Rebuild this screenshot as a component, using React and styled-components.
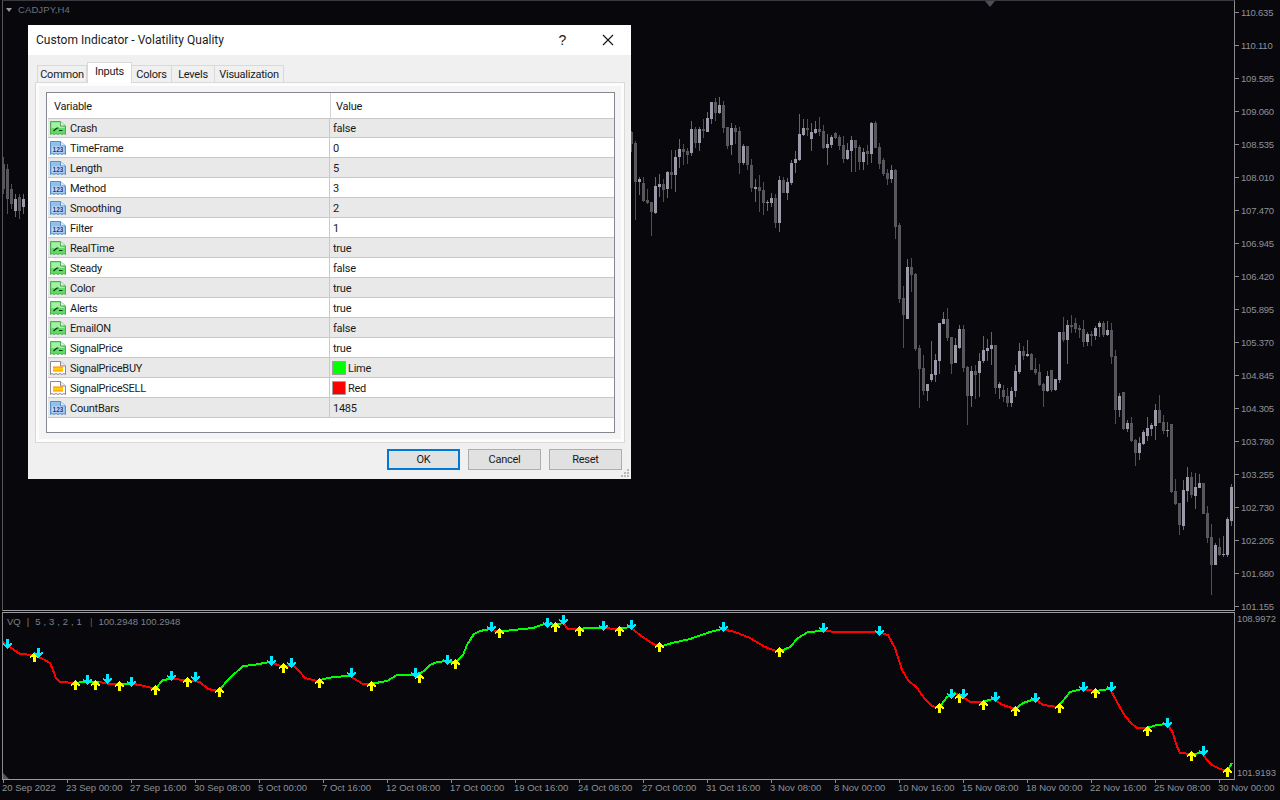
import React from 'react';
import styled, { createGlobalStyle } from 'styled-components';

const GlobalStyle = createGlobalStyle`
  html, body {
    margin: 0;
    padding: 0;
    background: #07070c;
    overflow: hidden;
  }
  #root {
    width: 1280px;
    height: 800px;
  }
`;

const Terminal = styled.div`
  position: relative;
  width: 1280px;
  height: 800px;
  display: flex;
  flex-direction: column;
  background: #07070c;
  font-family: "Liberation Sans", Arial, sans-serif;
  font-size: 9.5px;
  color: #8c929a;
  overflow: hidden;
`;

const Pane = styled.div`
  display: flex;
  height: ${p => p.$height}px;
  margin-bottom: ${p => p.$gap || 0}px;
`;

const Plot = styled.div`
  position: relative;
  width: 1231px;
  margin-left: 2px;
  border-left: 1px solid ${p => p.$edge};
  border-right: 1px solid #8a8a8e;
  border-top: 1px solid ${p => p.$top};
  border-bottom: 1px solid #9a9a9e;
  svg {
    display: block;
  }
`;

const ChartTitle = styled.div`
  position: absolute;
  left: 3px;
  top: 3px;
  display: flex;
  align-items: center;
  gap: 6px;
  line-height: 12px;
  color: #6c727c;
  letter-spacing: 0.1px;
  &::before {
    content: '';
    border-left: 3.5px solid transparent;
    border-right: 3.5px solid transparent;
    border-top: 4px solid #9a9a9e;
  }
`;

const ShiftMark = styled.div`
  position: absolute;
  left: 982px;
  top: 0;
  border-left: 5px solid transparent;
  border-right: 5px solid transparent;
  border-top: 6px solid #4e4e54;
`;

const IndicatorLabel = styled.div`
  position: absolute;
  left: 4px;
  top: 3px;
  display: flex;
  gap: 6px;
  line-height: 12px;
  white-space: pre;
  color: #7a828b;
`;

const IndicatorParams = styled.span`
  word-spacing: 0.3px;
`;

const Divider = styled.span`
  margin-left: 2px;
  color: #8a5a20;
`;

const CornerMark = styled.div`
  position: absolute;
  left: 0;
  bottom: 0;
  border-left: 6px solid #55555c;
  border-top: 6px solid transparent;
`;

const PriceAxis = styled.div`
  display: flex;
  flex-direction: column;
  gap: 24px;
  padding-top: 8px;
`;

const PriceLabel = styled.div`
  display: flex;
  align-items: center;
  height: 9px;
  line-height: 9px;
  letter-spacing: -0.2px;
  &::before {
    content: '';
    width: 4px;
    height: 1px;
    margin-right: 2px;
    background: #8a8a8e;
  }
`;

const IndicatorAxis = styled.div`
  display: flex;
  flex-direction: column;
  justify-content: space-between;
  padding: 1px 0 1px 2px;
`;

const IndicatorPrice = styled.div`
  line-height: 12px;
  letter-spacing: -0.1px;
`;

const TimeAxis = styled.div`
  display: flex;
  padding-left: 2px;
`;

const TimeLabel = styled.div`
  width: 64px;
  flex: none;
  white-space: nowrap;
  line-height: 10px;
  &::before {
    content: '';
    display: block;
    width: 1px;
    height: 3px;
    margin-left: 1px;
    background: #8a8a8e;
  }
`;

/* dialog */
const Dialog = styled.div`
  position: absolute;
  left: 28px;
  top: 25px;
  width: 603px;
  height: 454px;
  display: flex;
  flex-direction: column;
  background: #f0f0f0;
  color: #1a1a1a;
  font-family: Roboto, "Liberation Sans", sans-serif;
  font-size: 11px;
  letter-spacing: -0.25px;
`;

const TitleBar = styled.div`
  height: 30px;
  flex: none;
  display: flex;
  align-items: center;
  padding-left: 8px;
  background: #fff;
  font-size: 12px;
  letter-spacing: 0.03px;
`;

const TitleText = styled.div`
  flex: 1;
`;

const HelpButton = styled.div`
  width: 45px;
  text-align: center;
  font-family: "Liberation Sans", sans-serif;
  font-size: 14px;
`;

const CloseButton = styled.div`
  width: 45px;
  margin-right: 1px;
  display: flex;
  justify-content: center;
`;

const TabStrip = styled.div`
  position: relative;
  z-index: 1;
  display: flex;
  align-items: flex-end;
  height: 21px;
  margin-top: 7px;
  margin-bottom: -1px;
  padding-left: 9px;
`;

const Tab = styled.div`
  width: ${p => p.$width}px;
  height: ${p => (p.$active ? 21 : 18)}px;
  box-sizing: border-box;
  flex: none;
  display: flex;
  align-items: center;
  justify-content: center;
  padding-bottom: ${p => (p.$active ? 3 : 0)}px;
  border: 1px solid #d9d9d9;
  border-left-width: ${p => (p.$active ? 1 : 0)}px;
  border-bottom: ${p => (p.$active ? 'none' : '1px solid #d9d9d9')};
  background: ${p => (p.$active ? '#fff' : '#f0f0f0')};
  &:first-child {
    border-left-width: 1px;
  }
`;

const TabPanel = styled.div`
  box-sizing: border-box;
  height: 361px;
  margin: 0 6px 0 7px;
  padding: 9px 9px 9px 10px;
  border: 1px solid #d9d9d9;
  background: #f4f4f4;
  box-shadow: inset 0 0 0 3px #fcfcfc;
`;

const List = styled.div`
  box-sizing: border-box;
  height: 341px;
  padding-left: 1px;
  border: 1px solid #828790;
  background: #fff;
`;

const Row = styled.div`
  display: grid;
  grid-template-columns: 282px 283px;
  box-sizing: border-box;
  height: 20px;
  border-bottom: 1px solid #c9c9c9;
  background: ${p => (p.$shaded ? '#e9e9e9' : '#fff')};
  &:nth-child(2) {
    height: 19px;
  }
`;

const HeaderRow = styled(Row)`
  height: 26px;
  background: #fff;
`;

const HeaderCell = styled.div`
  display: flex;
  align-items: center;
  padding-top: 2px;
  padding-left: ${p => p.$indent}px;
  border-left: ${p => (p.$divided ? '1px solid #d5d5d5' : 'none')};
`;

const NameCell = styled.div`
  display: flex;
  align-items: center;
  gap: 4px;
  padding-left: 2px;
  border-right: 1px solid #c9c9c9;
  svg {
    flex: none;
  }
`;

const ValueCell = styled.div`
  display: flex;
  align-items: center;
  gap: 2px;
  padding-left: 3px;
`;

const CellText = styled.span`
  padding-top: ${p => (p.$nudged ? 2 : 0)}px;
`;

const Swatch = styled.span`
  box-sizing: border-box;
  width: 14px;
  height: 14px;
  margin-left: -1px;
  border: 1px solid #a0a0a0;
  background: ${p => p.$color};
`;

const ButtonBar = styled.div`
  display: flex;
  justify-content: flex-end;
  gap: 8px;
  margin-top: 6px;
  padding-right: 9px;
`;

const Button = styled.div`
  box-sizing: border-box;
  width: 73px;
  height: 21px;
  display: flex;
  align-items: center;
  justify-content: center;
  border: ${p => (p.$primary ? '2px solid #0078d7' : '1px solid #adadad')};
  background: #e1e1e1;
`;

const Grip = styled.svg`
  position: absolute;
  right: 1px;
  bottom: 1px;
`;

const DocIcon = ({ kind }) => {
  const outline = 'M0.5 1.5H10.5L15.5 6V14.5L14 13.5 12 14.5 10 13.5 8 14.5 6 13.5 4 14.5 2 13.5 0.5 14.5Z';
  if (kind === 'bool') {
    return (
      <svg width="16" height="16" viewBox="0 0 16 16">
        <path d={outline} fill="#5fdc62" stroke="#5aa65c" />
        <path d="M1.5 2.5H10V5.5L14.5 7V8H1.5Z" fill="#a4f0a6" />
        <path d="M10.5 1.5V6H15.5" fill="#e0fae0" stroke="#5aa65c" />
        <path d="M3.5 11L7 8H8.5M9 10.5H12.5" fill="none" stroke="#0c2a16" strokeWidth="1.2" />
      </svg>
    );
  }
  if (kind === 'num') {
    return (
      <svg width="16" height="16" viewBox="0 0 16 16">
        <path d={outline} fill="#8fc0ee" stroke="#5b8fc4" />
        <path d="M10.5 1.5V6H15.5" fill="#dcecfa" stroke="#5b8fc4" />
        <rect x="2" y="6.5" width="12" height="6" fill="#c4ddf6" />
        <text x="8" y="11.8" textAnchor="middle" fontFamily="Liberation Sans, sans-serif" fontSize="6.5" fontWeight="700" letterSpacing="0" fill="#0b3c86">123</text>
      </svg>
    );
  }
  return (
    <svg width="16" height="16" viewBox="0 0 16 16">
      <defs>
        <linearGradient id="fillcolor" x1="0" x2="0" y1="0" y2="1">
          <stop offset="0" stopColor="#ff8a00" />
          <stop offset="0.5" stopColor="#ffe000" />
          <stop offset="1" stopColor="#ff8a00" />
        </linearGradient>
      </defs>
      <path d={outline} fill="#fdfdfd" stroke="#8a8a8a" />
      <path d="M10.5 1.5V6H15.5" fill="#eee" stroke="#8a8a8a" />
      <rect x="3" y="6.5" width="10" height="5" fill="url(#fillcolor)" />
    </svg>
  );
};

const inputs = [
  ['bool', 'Crash', 'false'],
  ['num', 'TimeFrame', '0'],
  ['num', 'Length', '5'],
  ['num', 'Method', '3'],
  ['num', 'Smoothing', '2'],
  ['num', 'Filter', '1'],
  ['bool', 'RealTime', 'true'],
  ['bool', 'Steady', 'false'],
  ['bool', 'Color', 'true'],
  ['bool', 'Alerts', 'true'],
  ['bool', 'EmailON', 'false'],
  ['bool', 'SignalPrice', 'true'],
  ['color', 'SignalPriceBUY', 'Lime', '#00ff00'],
  ['color', 'SignalPriceSELL', 'Red', '#ff0000'],
  ['num', 'CountBars', '1485'],
];

const prices = ['110.635', '110.110', '109.585', '109.060', '108.535', '108.010', '107.470', '106.945', '106.420', '105.895', '105.370', '104.845', '104.305', '103.780', '103.255', '102.730', '102.205', '101.680', '101.155'];

const times = ['20 Sep 2022', '23 Sep 00:00', '27 Sep 16:00', '30 Sep 08:00', '5 Oct 00:00', '7 Oct 16:00', '12 Oct 08:00', '17 Oct 00:00', '19 Oct 16:00', '24 Oct 08:00', '27 Oct 00:00', '31 Oct 16:00', '3 Nov 08:00', '8 Nov 00:00', '10 Nov 16:00', '15 Nov 08:00', '18 Nov 00:00', '22 Nov 16:00', '25 Nov 08:00', '30 Nov 00:00'];

// candles: x, high, body top, body bottom, low, light. Measured in thirds of a pixel from the origin given.
const scale = (ox, oy, rows) => rows.map(([x, hi, top, bot, lo, light]) => ({
  x: Math.floor(ox + x / 3),
  hi: oy + hi / 3,
  top: oy + top / 3,
  bot: oy + bot / 3,
  lo: oy + lo / 3,
  light,
}));

const candles = [
  ...scale(0, 0, [
    [10, 474, 495, 570, 585, 0], [22, 495, 510, 600, 645, 0], [34, 555, 570, 615, 630, 0], [46, 585, 600, 636, 654, 1],
    [58, 585, 594, 636, 660, 0], [70, 585, 600, 624, 645, 1],
  ]),
  ...scale(630, 90, [
    [4, 125, 130, 165, 190, 0], [16, 155, 163, 278, 392, 0], [28, 265, 270, 278, 318, 1], [40, 265, 282, 335, 340, 0],
    [52, 300, 334, 343, 345, 0], [64, 339, 339, 368, 440, 0], [76, 265, 291, 372, 375, 1], [88, 255, 285, 294, 323, 1],
    [100, 270, 285, 303, 340, 0], [112, 245, 249, 300, 326, 1], [124, 183, 249, 258, 300, 0], [136, 183, 204, 258, 308, 1],
    [148, 150, 180, 204, 237, 1], [160, 165, 180, 189, 228, 0], [172, 178, 186, 198, 225, 0], [184, 97, 120, 192, 202, 1],
    [196, 115, 120, 162, 178, 0], [208, 115, 120, 162, 186, 1], [220, 90, 120, 126, 147, 0], [232, 70, 87, 129, 129, 1],
    [244, 39, 39, 90, 105, 1], [256, 27, 39, 72, 96, 0], [268, 24, 48, 72, 75, 1], [280, 36, 48, 117, 132, 0],
    [292, 114, 114, 171, 180, 0], [304, 102, 117, 168, 198, 1], [316, 108, 117, 129, 165, 0], [328, 114, 126, 222, 255, 0],
    [340, 165, 171, 222, 228, 1], [352, 171, 171, 228, 243, 0], [364, 210, 228, 297, 310, 0], [376, 270, 294, 300, 340, 1],
    [388, 258, 294, 306, 370, 0], [400, 279, 303, 342, 378, 0], [412, 333, 339, 342, 366, 1], [424, 312, 327, 342, 354, 1],
    [436, 315, 327, 402, 417, 0], [448, 262, 273, 402, 428, 1], [460, 264, 273, 312, 312, 0], [472, 267, 279, 312, 333, 1],
    [484, 213, 222, 282, 288, 1], [496, 186, 210, 222, 252, 1], [508, 75, 135, 213, 216, 1], [520, 90, 117, 138, 140, 1],
    [532, 90, 117, 123, 140, 0], [544, 102, 129, 150, 186, 1], [556, 96, 120, 132, 135, 1], [568, 84, 120, 129, 140, 0],
    [580, 108, 126, 177, 180, 0], [592, 135, 165, 177, 228, 1], [604, 138, 144, 168, 177, 1], [616, 129, 132, 147, 150, 0],
    [628, 138, 144, 171, 183, 0], [640, 140, 168, 210, 222, 0], [652, 162, 183, 210, 213, 1], [664, 140, 153, 186, 249, 1],
    [676, 153, 153, 177, 249, 0], [688, 168, 174, 219, 243, 0], [700, 178, 189, 219, 243, 1], [712, 168, 186, 195, 228, 0],
    [724, 100, 102, 195, 222, 1], [736, 96, 102, 177, 177, 0], [748, 162, 174, 225, 240, 0], [760, 207, 213, 255, 262, 0],
    [772, 240, 252, 270, 288, 0], [784, 228, 243, 270, 282, 1], [796, 240, 243, 414, 450, 0], [808, 402, 408, 630, 642, 0],
    [820, 591, 627, 678, 777, 0], [832, 510, 534, 690, 690, 1], [844, 507, 534, 558, 609, 0], [856, 552, 555, 780, 786, 0],
  ]),
  ...scale(880, 280, [
    [118, 198, 207, 270, 387, 0], [130, 228, 267, 336, 348, 0], [142, 315, 315, 336, 366, 1], [154, 186, 285, 303, 309, 1],
    [166, 225, 243, 288, 309, 1], [178, 132, 132, 246, 285, 1], [190, 99, 120, 135, 135, 1], [202, 87, 120, 177, 186, 0],
    [214, 174, 174, 255, 285, 0], [226, 177, 198, 252, 252, 1], [238, 138, 150, 207, 210, 1], [250, 138, 150, 267, 279, 0],
    [262, 261, 264, 351, 438, 0], [274, 261, 276, 351, 384, 1], [286, 258, 276, 288, 360, 0], [298, 222, 246, 282, 354, 1],
    [310, 171, 213, 246, 252, 1], [322, 180, 207, 216, 246, 1], [334, 159, 198, 210, 258, 1], [346, 198, 198, 327, 345, 0],
    [358, 309, 315, 327, 360, 1], [370, 318, 333, 354, 369, 0], [382, 327, 351, 372, 384, 0], [394, 324, 336, 372, 384, 1],
    [406, 258, 276, 336, 354, 1], [418, 192, 216, 279, 285, 1], [430, 201, 216, 231, 243, 0], [442, 183, 225, 231, 234, 1],
    [454, 222, 225, 273, 273, 0], [466, 237, 270, 282, 288, 0], [478, 255, 279, 318, 321, 0], [490, 312, 315, 336, 384, 0],
    [502, 276, 291, 336, 339, 1], [514, 273, 273, 333, 339, 0], [526, 300, 300, 333, 336, 1], [538, 159, 159, 303, 312, 1],
    [550, 114, 159, 183, 189, 0], [562, 123, 138, 183, 255, 1], [574, 108, 138, 144, 162, 0], [586, 117, 132, 150, 162, 0],
    [598, 138, 147, 153, 177, 0], [610, 123, 150, 189, 204, 0], [622, 159, 165, 189, 201, 1], [634, 156, 165, 171, 201, 0],
    [646, 141, 147, 171, 183, 1], [658, 126, 132, 144, 174, 1], [670, 126, 132, 168, 174, 0], [682, 126, 153, 168, 171, 1],
    [694, 132, 153, 234, 255, 0], [706, 213, 231, 393, 435, 0], [718, 342, 351, 393, 414, 1], [730, 339, 339, 450, 453, 0],
    [742, 423, 432, 450, 459, 1], [754, 414, 432, 486, 489, 0], [766, 480, 483, 522, 561, 0], [778, 474, 492, 522, 543, 1],
    [790, 453, 459, 495, 498, 1], [802, 414, 447, 471, 486, 1], [814, 432, 438, 450, 471, 1], [826, 375, 393, 441, 483, 1],
    [838, 348, 393, 432, 432, 0], [850, 408, 429, 456, 465, 0], [862, 429, 453, 456, 474, 1],
  ]),
  ...scale(1100, 440, [
    [214, -45, -45, 158, 162, 0], [226, 120, 156, 195, 198, 0], [238, 192, 192, 258, 288, 0], [250, 123, 153, 261, 273, 1],
    [262, 84, 114, 156, 189, 1], [274, 99, 114, 168, 177, 0], [286, 102, 144, 171, 210, 1], [298, 105, 132, 147, 147, 1],
    [310, 132, 132, 225, 225, 0], [322, 201, 222, 297, 312, 0], [334, 255, 294, 378, 468, 0], [346, 312, 318, 378, 378, 1],
    [358, 297, 324, 348, 351, 0], [370, 291, 345, 348, 354, 1], [382, 234, 240, 348, 354, 1], [394, 135, 144, 246, 261, 1],
  ]),
];

// x, y, colour of the stretch that ends at this point
const trace = [
  [3, 642, 'r'], [7, 645, 'r'], [14, 650, 'r'], [20, 654, 'r'], [33, 655, 'r'], [43, 659, 'r'], [50, 663, 'r'], [53, 670, 'r'], [56, 678, 'r'], [60, 682, 'r'], [75, 683, 'r'],
  [83, 682, 'g'], [99, 682, 'g'], [110, 684, 'r'], [120, 684, 'r'], [133, 684, 'g'], [140, 685, 'r'], [148, 687, 'r'], [155, 689, 'r'],
  [163, 680, 'g'], [170, 679, 'g'], [187, 680, 'r'], [200, 682, 'r'], [208, 689, 'r'], [218, 691, 'r'],
  [230, 678, 'g'], [243, 666, 'g'], [253, 665, 'g'], [270, 662, 'g'], [283, 667, 'r'], [293, 665, 'r'], [299, 671, 'r'], [305, 678, 'r'], [317, 681, 'r'],
  [324, 679, 'g'], [333, 677, 'g'], [350, 676, 'g'], [358, 681, 'r'], [363, 684, 'r'], [370, 684, 'r'], [387, 681, 'g'], [397, 675, 'g'], [413, 675, 'g'], [417, 676, 'r'],
  [425, 670, 'g'], [430, 665, 'g'], [437, 662, 'g'], [447, 661, 'g'], [455, 663, 'g'], [463, 655, 'g'], [467, 645, 'g'], [470, 640, 'g'], [474, 634, 'g'], [480, 631, 'g'], [490, 629, 'g'],
  [498, 632, 'r'], [513, 630, 'g'], [533, 628, 'g'], [547, 623, 'g'], [555, 625, 'g'], [563, 623, 'g'], [568, 629, 'r'], [580, 629, 'r'],
  [587, 628, 'g'], [602, 628, 'g'], [617, 629, 'r'], [630, 627, 'g'], [640, 635, 'r'], [650, 642, 'r'], [659, 647, 'r'],
  [672, 643, 'g'], [690, 639, 'g'], [710, 632, 'g'], [722, 629, 'g'], [735, 632, 'r'], [750, 638, 'r'], [765, 647, 'r'], [779, 652, 'r'],
  [790, 647, 'g'], [798, 638, 'g'], [808, 632, 'g'], [822, 631, 'g'], [840, 632, 'r'], [860, 632, 'r'], [878, 632, 'r'], [888, 635, 'r'], [895, 648, 'r'], [902, 670, 'r'], [908, 680, 'r'], [917, 688, 'r'], [925, 699, 'r'], [932, 706, 'r'], [939, 708, 'r'],
  [947, 697, 'g'], [955, 693, 'g'], [963, 697, 'r'], [970, 702, 'r'], [982, 702, 'r'], [993, 699, 'g'], [1003, 705, 'r'], [1015, 709, 'r'],
  [1023, 703, 'g'], [1035, 699, 'g'], [1043, 705, 'r'], [1058, 707, 'r'], [1070, 692, 'g'], [1082, 689, 'g'], [1095, 691, 'r'], [1110, 689, 'g'],
  [1116, 700, 'r'], [1123, 713, 'r'], [1130, 722, 'r'], [1137, 728, 'r'], [1147, 728, 'r'], [1157, 725, 'g'], [1167, 724, 'g'], [1173, 733, 'r'], [1176, 744, 'r'], [1180, 753, 'r'], [1192, 754, 'r'],
  [1202, 753, 'g'], [1207, 760, 'r'], [1212, 765, 'r'], [1220, 769, 'r'], [1227, 771, 'r'], [1232, 763, 'g'],
];

const upArrows = [[34, 657], [75, 685], [95, 685], [119, 686], [155, 690], [187, 682], [219, 692], [283, 668], [319, 683], [371, 686], [419, 678], [455, 664], [499, 633], [555, 627], [579, 631], [619, 631], [659, 647], [779, 652], [939, 708], [959, 698], [983, 705], [1015, 711], [1059, 708], [1095, 693], [1147, 731], [1191, 756], [1227, 772]];
const downArrows = [[7, 644], [38, 653], [87, 680], [107, 679], [131, 682], [171, 676], [195, 677], [271, 661], [291, 663], [351, 673], [415, 673], [447, 660], [491, 627], [547, 623], [563, 620], [603, 626], [631, 625], [723, 627], [823, 628], [879, 631], [951, 694], [963, 694], [995, 697], [1035, 698], [1083, 687], [1111, 687], [1167, 723], [1203, 751]];

const lineColor = { r: '#ff0000', g: '#00ff00' };

const traceRuns = () => {
  const runs = [];
  trace.forEach(([x, y, c], i) => {
    if (i === 0) return;
    const last = runs[runs.length - 1];
    if (last && last.c === c) {
      last.d += ` L${x} ${y}`;
    } else {
      const [px, py] = trace[i - 1];
      runs.push({ c, d: `M${px} ${py} L${x} ${y}` });
    }
  });
  return runs;
};

const CandleChart = () => (
  <svg width="1231" height="608" viewBox="3 2 1231 608" shapeRendering="crispEdges">
    {candles.map(c => (
      <g key={c.x} fill={c.light ? '#9a9aa8' : '#58585c'}>
        <rect x={c.x} y={c.hi} width="1" height={c.lo - c.hi} fill={c.light ? '#66666c' : '#505054'} />
        <rect x={c.x - 1} y={c.top} width="3" height={Math.max(c.bot - c.top, 1)} />
      </g>
    ))}
  </svg>
);

const IndicatorChart = () => (
  <svg width="1231" height="165" viewBox="3 613 1231 165" shapeRendering="crispEdges">
    {traceRuns().map((run, i) => (
      <path key={i} d={run.d} fill="none" stroke={lineColor[run.c]} strokeWidth="2" strokeLinejoin="round" />
    ))}
    {upArrows.map(([x, y]) => (
      <path key={x} transform={`translate(${x} ${y})`} d="M0 -5L4.5 -0.5V1.5L1.5 -0.5V5H-1.5V-0.5L-4.5 1.5V-0.5Z" fill="#ffff00" />
    ))}
    {downArrows.map(([x, y]) => (
      <path key={x} transform={`translate(${x} ${y})`} d="M0 5L4.5 0.5V-1.5L1.5 0.5V-5H-1.5V0.5L-4.5 -1.5V0.5Z" fill="#00e8ff" />
    ))}
  </svg>
);

function App() {
  return (
    <Terminal>
      <GlobalStyle />
      <Pane $height={611} $gap={1}>
        <Plot $edge="#55555a" $top="#3a3a40">
          <CandleChart />
          <ChartTitle>CADJPY,H4</ChartTitle>
          <ShiftMark />
        </Plot>
        <PriceAxis>
          {prices.map(p => <PriceLabel key={p}>{p}</PriceLabel>)}
        </PriceAxis>
      </Pane>
      <Pane $height={168}>
        <Plot $edge="#8a8a8e" $top="#9a9a9e">
          <IndicatorChart />
          <IndicatorLabel>
            <span>VQ</span>
            <span>|</span>
            <IndicatorParams>5 , 3 , 2 , 1</IndicatorParams>
            <Divider>|</Divider>
            <span>100.2948 100.2948</span>
          </IndicatorLabel>
          <CornerMark />
        </Plot>
        <IndicatorAxis>
          <IndicatorPrice>108.9972</IndicatorPrice>
          <IndicatorPrice>101.9193</IndicatorPrice>
        </IndicatorAxis>
      </Pane>
      <TimeAxis>
        {times.map(t => <TimeLabel key={t}>{t}</TimeLabel>)}
      </TimeAxis>

      <Dialog>
        <TitleBar>
          <TitleText>Custom Indicator - Volatility Quality</TitleText>
          <HelpButton>?</HelpButton>
          <CloseButton>
            <svg width="12" height="12" viewBox="0 0 12 12">
              <path d="M1 1L11 11M11 1L1 11" stroke="#111" strokeWidth="1.1" fill="none" />
            </svg>
          </CloseButton>
        </TitleBar>
        <TabStrip>
          <Tab $width={50}>Common</Tab>
          <Tab $width={45} $active>Inputs</Tab>
          <Tab $width={40}>Colors</Tab>
          <Tab $width={43}>Levels</Tab>
          <Tab $width={69}>Visualization</Tab>
        </TabStrip>
        <TabPanel>
          <List>
            <HeaderRow>
              <HeaderCell $indent={6}>Variable</HeaderCell>
              <HeaderCell $indent={5} $divided>Value</HeaderCell>
            </HeaderRow>
            {inputs.map(([kind, name, value, color], i) => (
              <Row key={name} $shaded={i % 2 === 0}>
                <NameCell>
                  <DocIcon kind={kind} />
                  <CellText $nudged={i > 0}>{name}</CellText>
                </NameCell>
                <ValueCell>
                  {color && <Swatch $color={color} />}
                  <CellText $nudged={i > 0}>{value}</CellText>
                </ValueCell>
              </Row>
            ))}
          </List>
        </TabPanel>
        <ButtonBar>
          <Button $primary>OK</Button>
          <Button>Cancel</Button>
          <Button>Reset</Button>
        </ButtonBar>
        <Grip width="10" height="10" viewBox="0 0 10 10" fill="#b8b8b8">
          <rect x="7" y="1" width="2" height="2" />
          <rect x="4" y="4" width="2" height="2" />
          <rect x="7" y="4" width="2" height="2" />
          <rect x="1" y="7" width="2" height="2" />
          <rect x="4" y="7" width="2" height="2" />
          <rect x="7" y="7" width="2" height="2" />
        </Grip>
      </Dialog>
    </Terminal>
  );
}

export default App;
